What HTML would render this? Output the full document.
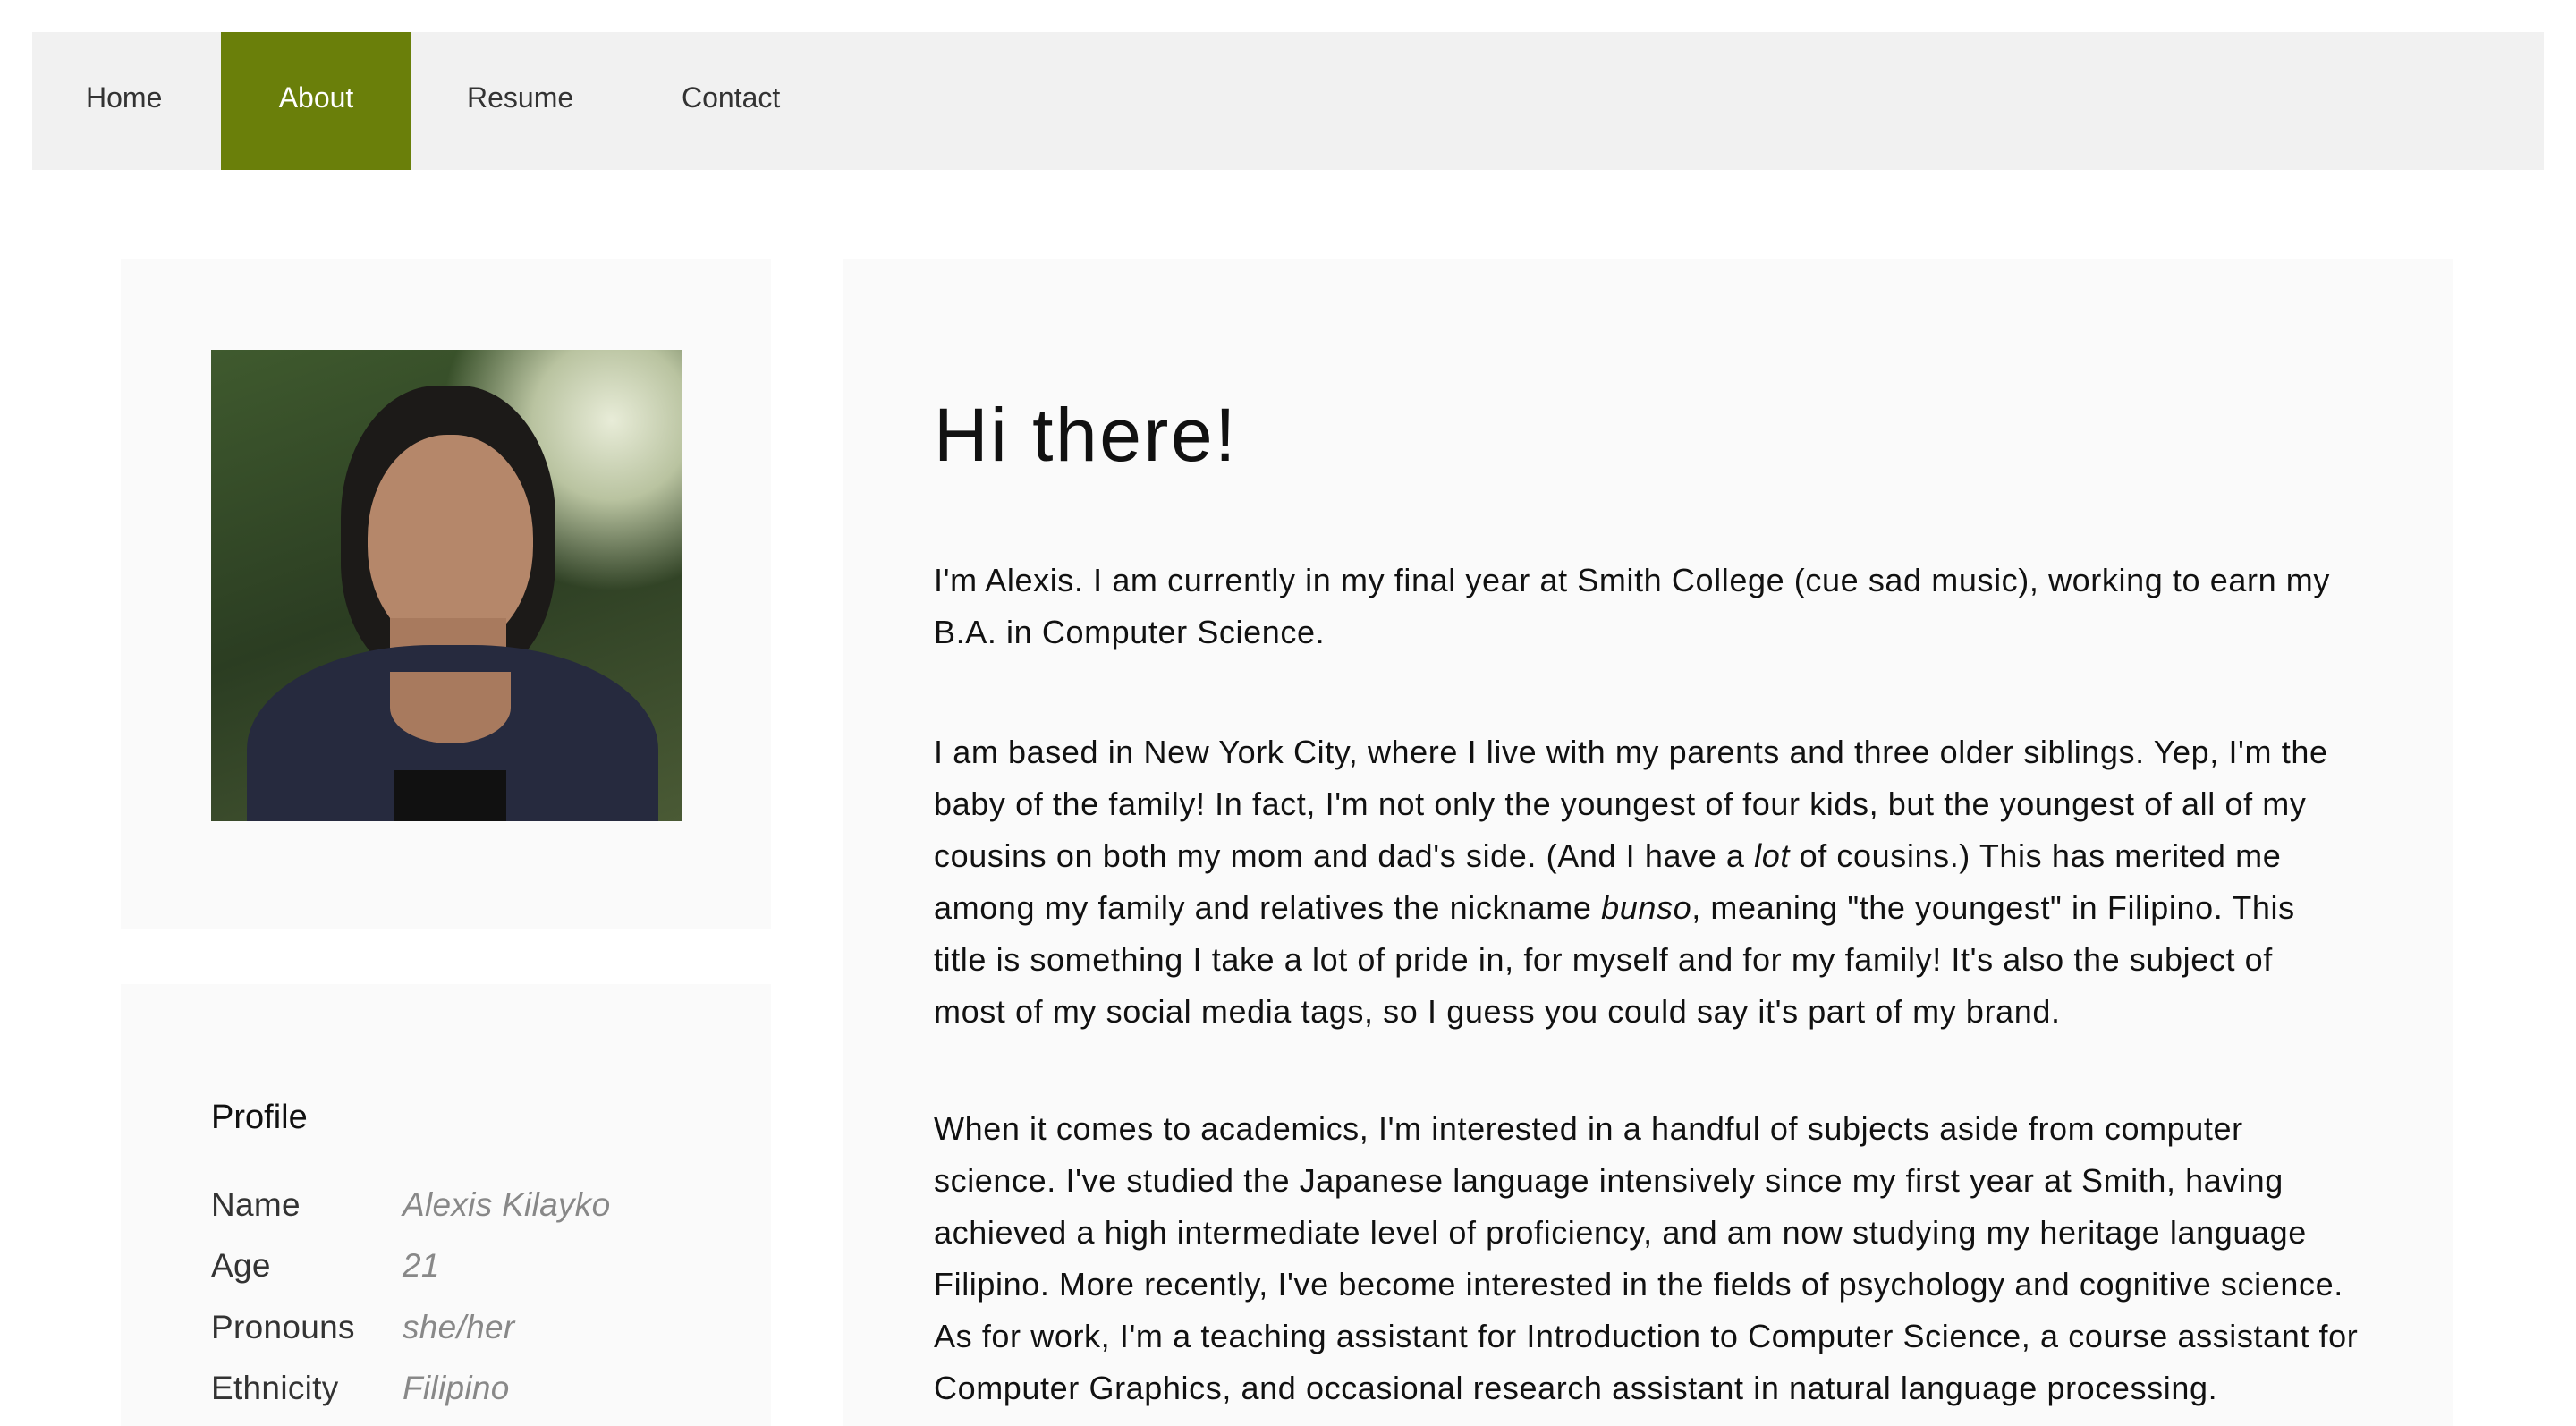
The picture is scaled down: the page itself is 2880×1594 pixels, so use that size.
<!DOCTYPE html>
<html style="width:2880px;height:1594px;overflow:hidden"><head><meta charset="utf-8"><style>
*{margin:0;padding:0;box-sizing:border-box}
body{width:2880px;height:1594px;overflow:hidden;background:#fff;font-family:"Liberation Sans",sans-serif;color:#111;position:relative}
.nav{position:absolute;left:36px;top:36px;width:2808px;height:154px;background:#f1f1f1}
.nav a{position:absolute;top:-4px;height:154px;line-height:154px;font-size:32px;color:#333;text-decoration:none}
.card{position:absolute;background:#fafafa}
.photo{position:absolute;left:236px;top:391px;width:527px;height:527px;overflow:hidden;background:radial-gradient(ellipse at 85% 15%,#e8ecd8 0,#b9c3a0 14%,transparent 30%),linear-gradient(160deg,#3f5a2e,#2b3d22 50%,#4a5a35)}
.p{position:absolute;left:1044px;font-size:36px;line-height:58px;letter-spacing:0.6px;white-space:nowrap;color:#111}
.row{position:absolute;left:236px;font-size:37px;color:#333;white-space:nowrap;letter-spacing:0.3px}
.row i{position:absolute;left:214px;color:#888}
</style></head><body>
<div class="nav">
<a style="left:60px">Home</a>
<a style="left:211px;width:213px;top:0;background:#6a7f0a;color:#fff;text-align:center;line-height:146px">About</a>
<a style="left:486px">Resume</a>
<a style="left:726px">Contact</a>
</div>
<div class="card" style="left:135px;top:290px;width:727px;height:748px"></div>
<div class="photo">
<div style="position:absolute;left:145px;top:40px;width:240px;height:330px;border-radius:45% 45% 40% 40%;background:#1c1a18"></div>
<div style="position:absolute;left:175px;top:95px;width:185px;height:240px;border-radius:48%;background:#b5876a"></div>
<div style="position:absolute;left:200px;top:300px;width:130px;height:120px;background:#a87a5e"></div>
<div style="position:absolute;left:40px;top:330px;width:460px;height:260px;border-radius:45% 45% 0 0;background:#262a3e"></div>
<div style="position:absolute;left:200px;top:360px;width:135px;height:80px;border-radius:0 0 50% 50%;background:#a87a5e"></div>
<div style="position:absolute;left:205px;top:470px;width:125px;height:60px;background:#111"></div>
</div>
<div class="card" style="left:135px;top:1100px;width:727px;height:494px"></div>
<div style="position:absolute;left:236px;top:1228px;font-size:38px;color:#111">Profile</div>
<div class="row" style="top:1326px">Name<i>Alexis Kilayko</i></div>
<div class="row" style="top:1394px">Age<i>21</i></div>
<div class="row" style="top:1463px">Pronouns<i>she/her</i></div>
<div class="row" style="top:1531px">Ethnicity<i>Filipino</i></div>
<div class="card" style="left:943px;top:290px;width:1800px;height:1304px"></div>
<div style="position:absolute;left:1044px;top:438px;font-size:84px;letter-spacing:2.5px;color:#111">Hi there!</div>
<div class="p" style="top:620px">I'm Alexis. I am currently in my final year at Smith College (cue sad music), working to earn my<br>B.A. in Computer Science.</div>
<div class="p" style="top:812px">I am based in New York City, where I live with my parents and three older siblings. Yep, I'm the<br>baby of the family! In fact, I'm not only the youngest of four kids, but the youngest of all of my<br>cousins on both my mom and dad's side. (And I have a <i>lot</i> of cousins.) This has merited me<br>among my family and relatives the nickname <i>bunso</i>, meaning "the youngest" in Filipino. This<br>title is something I take a lot of pride in, for myself and for my family! It's also the subject of<br>most of my social media tags, so I guess you could say it's part of my brand.</div>
<div class="p" style="top:1233px">When it comes to academics, I'm interested in a handful of subjects aside from computer<br>science. I've studied the Japanese language intensively since my first year at Smith, having<br>achieved a high intermediate level of proficiency, and am now studying my heritage language<br>Filipino. More recently, I've become interested in the fields of psychology and cognitive science.<br>As for work, I'm a teaching assistant for Introduction to Computer Science, a course assistant for<br>Computer Graphics, and occasional research assistant in natural language processing.</div>
</body></html>
